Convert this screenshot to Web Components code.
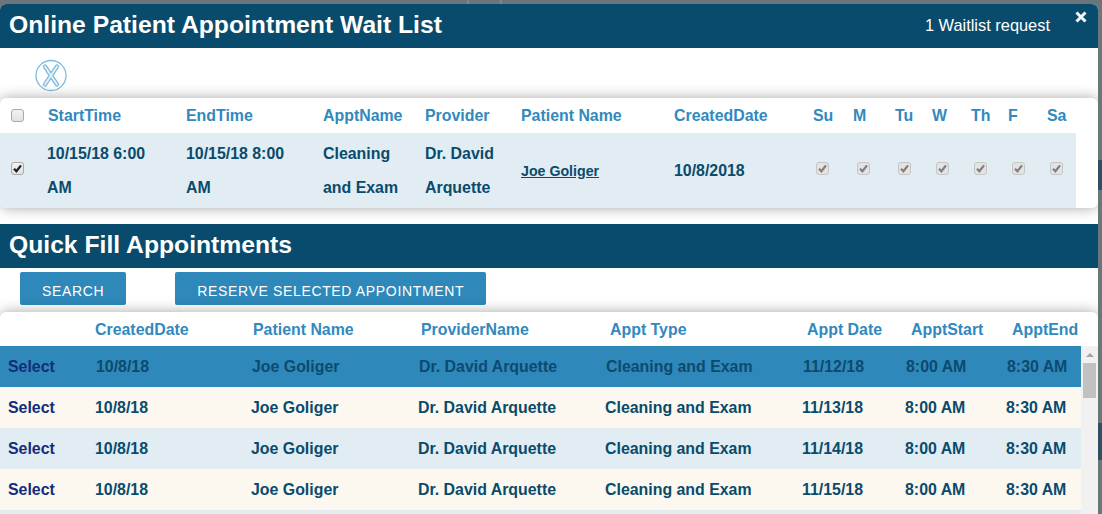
<!DOCTYPE html>
<html>
<head>
<meta charset="utf-8">
<title>Online Patient Appointment Wait List</title>
<style>
  html, body { margin: 0; height: 100%; overflow: hidden; }
  body {
    font-family: "Liberation Sans", Arial, sans-serif;
    background:
      linear-gradient(#304f60, #304f60) right 0 top 160px / 4px 30px no-repeat,
      linear-gradient(#304f60, #304f60) right 0 top 423px / 4px 37px no-repeat,
      linear-gradient(#7d868c, #7d868c) 467px 0 / 2px 4px no-repeat,
      linear-gradient(#7d868c, #7d868c) 500px 0 / 2px 4px no-repeat,
      #6b757c;
  }
</style>
</head>
<body>
<modal-window>
  <modal-bar heading="Online Patient Appointment Wait List" closable>1 Waitlist request</modal-bar>
  <round-cancel></round-cancel>
  <card-panel class="wait">
    <table-row kind="head" cols="var(--wait-cols)">
      <span><check-mark></check-mark></span><span>StartTime</span><span>EndTime</span><span>ApptName</span><span>Provider</span><span>Patient Name</span><span>CreatedDate</span>
      <span>Su</span><span>M</span><span>Tu</span><span>W</span><span>Th</span><span>F</span><span>Sa</span>
    </table-row>
    <table-row kind="wait" cols="var(--wait-cols)">
      <span><check-mark checked></check-mark></span><span class="first">10/15/18 6:00 AM</span><span>10/15/18 8:00 AM</span><span>Cleaning and Exam</span><span>Dr. David Arquette</span><span><patient-link>Joe Goliger</patient-link></span><span>10/8/2018</span>
      <span><check-mark checked disabled></check-mark></span><span><check-mark checked disabled></check-mark></span><span><check-mark checked disabled></check-mark></span><span><check-mark checked disabled></check-mark></span><span><check-mark checked disabled></check-mark></span><span><check-mark checked disabled></check-mark></span><span><check-mark checked disabled></check-mark></span>
    </table-row>
  </card-panel>
  <modal-bar heading="Quick Fill Appointments"></modal-bar>
  <button-strip>
    <action-button>Search</action-button>
    <action-button>Reserve Selected Appointment</action-button>
  </button-strip>
  <card-panel class="fill">
    <table-row kind="head" short cols="var(--fill-head)">
      <span></span><span>CreatedDate</span><span>Patient Name</span><span>ProviderName</span><span>Appt Type</span><span>Appt Date</span><span>ApptStart</span><span>ApptEnd</span>
    </table-row>
    <scroll-area>
      <table-row kind="fill" selected cols="var(--fill-cols)"><select-link>Select</select-link><span>10/8/18</span><span>Joe Goliger</span><span>Dr. David Arquette</span><span>Cleaning and Exam</span><span>11/12/18</span><span>8:00 AM</span><span>8:30 AM</span></table-row>
      <table-row kind="fill" cols="var(--fill-cols)"><select-link>Select</select-link><span>10/8/18</span><span>Joe Goliger</span><span>Dr. David Arquette</span><span>Cleaning and Exam</span><span>11/13/18</span><span>8:00 AM</span><span>8:30 AM</span></table-row>
      <table-row kind="fill" alt cols="var(--fill-cols)"><select-link>Select</select-link><span>10/8/18</span><span>Joe Goliger</span><span>Dr. David Arquette</span><span>Cleaning and Exam</span><span>11/14/18</span><span>8:00 AM</span><span>8:30 AM</span></table-row>
      <table-row kind="fill" cols="var(--fill-cols)"><select-link>Select</select-link><span>10/8/18</span><span>Joe Goliger</span><span>Dr. David Arquette</span><span>Cleaning and Exam</span><span>11/15/18</span><span>8:00 AM</span><span>8:30 AM</span></table-row>
      <table-row kind="fill" alt cols="var(--fill-cols)"></table-row>
    </scroll-area>
  </card-panel>
</modal-window>

<script>
class ModalWindow extends HTMLElement {
  constructor() {
    super()
    this.attachShadow({mode: "open"}).innerHTML = `
      <style>
        :host {
          display: block;
          width: 1098px;
          height: 510px;
          margin-top: 4px;
          background: #fff;
          border-radius: 6px 6px 0 0;
          overflow: hidden;
          color: #084b6c;
          --wait-cols: 48px 138px 137px 102px 96px 153px 139px 40px 42px 37px 39px 37px 39px 51px;
          --fill-head: 95px 158px 168px 189px 197px 104px 101px 86px;
          --fill-cols: 87px 156px 167px 187px 197px 103px 101px 76px;
        }
      </style>
      <slot></slot>
    `
  }
}

class ModalBar extends HTMLElement {
  constructor() {
    super()
    const closeIcon = this.hasAttribute("closable") ? `
      <svg class="close" width="12" height="12" viewBox="0 0 12 12">
        <path d="M1.5 1.5 L10.5 10.5 M10.5 1.5 L1.5 10.5" stroke="#f4f8fa" stroke-width="3" fill="none"/>
      </svg>` : ""
    this.attachShadow({mode: "open"}).innerHTML = `
      <style>
        :host {
          display: flex;
          align-items: center;
          justify-content: space-between;
          position: relative;
          z-index: 2;
          height: 44px;
          box-sizing: border-box;
          padding: 0 48px 2px 9px;
          background: #084b6c;
          color: #fff;
        }
        h2 { margin: 0; font-size: 24.7px; font-weight: bold; line-height: 42px; }
        .note { font-size: 16.4px; }
        .close { position: absolute; right: 11px; top: 7px; }
      </style>
      <h2>${this.getAttribute("heading")}</h2>
      <span class="note"><slot></slot></span>
      ${closeIcon}
    `
  }
}

class RoundCancel extends HTMLElement {
  constructor() {
    super()
    this.attachShadow({mode: "open"}).innerHTML = `
      <style>
        :host { display: block; height: 50px; padding: 11px 0 0 35px; box-sizing: border-box; }
        svg { display: block; }
      </style>
      <svg width="32" height="33" viewBox="0 0 32 33" fill="none">
        <circle cx="16" cy="16.5" r="15" stroke="#7dbcdc" stroke-width="1.3"/>
        <path d="M10 7.5 L22 25.5 M22 7.5 L10 25.5" stroke="#7dbcdc" stroke-width="4.4" stroke-linecap="round"/>
        <path d="M10 7.5 L22 25.5 M22 7.5 L10 25.5" stroke="#e4f1f8" stroke-width="1.8" stroke-linecap="round"/>
      </svg>
    `
  }
}

class CardPanel extends HTMLElement {
  constructor() {
    super()
    this.attachShadow({mode: "open"}).innerHTML = `
      <style>
        :host {
          display: block;
          position: relative;
          z-index: 1;
          background: #fff;
          border-radius: 6px;
          overflow: hidden;
          box-shadow: 0 0 14px rgba(0, 0, 0, .35);
        }
        :host(.wait) { margin-bottom: 16px; }
        :host(.fill) { border-radius: 6px 6px 0 0; }
      </style>
      <slot></slot>
    `
  }
}

class TableRow extends HTMLElement {
  constructor() {
    super()
    this.attachShadow({mode: "open"}).innerHTML = `
      <style>
        :host {
          display: grid;
          grid-template-columns: var(--cols);
          align-items: center;
          font-size: 15.9px;
          font-weight: bold;
          color: #084b6c;
        }
        :host([kind="head"]) { height: 35px; color: #3189bd; }
        :host([short]) { height: 34px; box-sizing: border-box; padding-top: 2px; }
        :host([kind="wait"]) { width: 1076px; height: 75px; line-height: 34px; background: #e2ecf3; }
        :host([kind="wait"]) ::slotted(span) { padding-right: 22px; }
        :host([kind="wait"]) ::slotted(.first) { margin-left: -1px; }
        :host([kind="wait"]) ::slotted(span:nth-child(n+9):nth-child(odd)) { padding-left: 1px; }
        :host([kind="fill"]) { height: 41px; padding-left: 8px; background: #fdf8ef; }
        :host([alt]) { background: #e2ecf3; }
        :host([selected]) { background: #2e88b9; color: #0c4a70; }
        :host([selected]) ::slotted(span) { padding-left: 1px; }
      </style>
      <slot></slot>
    `
    this.style.setProperty("--cols", this.getAttribute("cols"))
  }
}

class CheckMark extends HTMLElement {
  constructor() {
    super()
    const tick = this.hasAttribute("checked") ? `
      <svg width="13" height="13" viewBox="0 0 13 13">
        <path d="M3 6.7 L5.4 9.2 L10 3.4" fill="none" stroke="currentColor" stroke-width="2.3"/>
      </svg>` : ""
    this.attachShadow({mode: "open"}).innerHTML = `
      <style>
        :host {
          display: block;
          box-sizing: border-box;
          width: 13px;
          height: 13px;
          margin-left: 11px;
          border: 1px solid #a9a9a9;
          border-radius: 3px;
          background: linear-gradient(#f2f2f2, #e2e2e2);
          color: #222;
        }
        :host([checked]) { margin-bottom: 4px; }
        :host([disabled]) {
          margin-left: 3px;
          border-color: #c6c6c6;
          background: #e3e3e3;
          color: #808080;
        }
        svg { display: block; margin: -1px; }
      </style>
      ${tick}
    `
  }
}

class PatientLink extends HTMLElement {
  constructor() {
    super()
    this.attachShadow({mode: "open"}).innerHTML = `
      <style>
        :host { font-size: 14.2px; line-height: 16px; text-decoration: underline; color: #084b6c; }
      </style>
      <slot></slot>
    `
  }
}

class SelectLink extends HTMLElement {
  constructor() {
    super()
    this.attachShadow({mode: "open"}).innerHTML = `
      <style>
        :host { display: block; color: #142c7c; }
      </style>
      <slot></slot>
    `
  }
}

class ButtonStrip extends HTMLElement {
  constructor() {
    super()
    this.attachShadow({mode: "open"}).innerHTML = `
      <style>
        :host { display: flex; gap: 49px; height: 44px; padding: 4px 0 0 20px; box-sizing: border-box; }
      </style>
      <slot></slot>
    `
  }
}

class ActionButton extends HTMLElement {
  constructor() {
    super()
    this.attachShadow({mode: "open"}).innerHTML = `
      <style>
        :host {
          display: block;
          height: 33px;
          padding: 0 22px;
          border-radius: 2px;
          background: #2e88b9;
          color: #fff;
          font-size: 14px;
          line-height: 38px;
          letter-spacing: .65px;
          text-transform: uppercase;
        }
      </style>
      <slot></slot>
    `
  }
}

class ScrollArea extends HTMLElement {
  constructor() {
    super()
    this.attachShadow({mode: "open"}).innerHTML = `
      <style>
        :host { display: flex; height: 168px; }
        .rows { flex: 1; min-width: 0; overflow: hidden; }
        .track { width: 17px; background: #f1f1f1; display: flex; flex-direction: column; align-items: center; }
        .arrow { width: 0; height: 0; margin: 7px 0 6px; border: 4px solid transparent; border-top: 0; border-bottom: 4px solid #a3a3a3; }
        .thumb { width: 13px; height: 35px; background: #c1c1c1; }
      </style>
      <div class="rows"><slot></slot></div>
      <div class="track"><div class="arrow"></div><div class="thumb"></div></div>
    `
  }
}

customElements.define("modal-window", ModalWindow)
customElements.define("modal-bar", ModalBar)
customElements.define("round-cancel", RoundCancel)
customElements.define("card-panel", CardPanel)
customElements.define("table-row", TableRow)
customElements.define("check-mark", CheckMark)
customElements.define("patient-link", PatientLink)
customElements.define("select-link", SelectLink)
customElements.define("button-strip", ButtonStrip)
customElements.define("action-button", ActionButton)
customElements.define("scroll-area", ScrollArea)
</script>
</body>
</html>
